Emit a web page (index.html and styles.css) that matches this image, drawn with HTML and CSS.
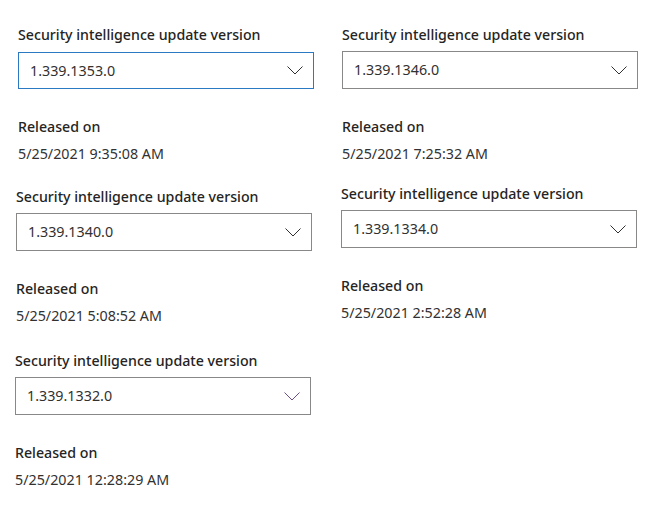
FILE: index.html
```html
<!DOCTYPE html>
<html>
<head>
<meta charset="utf-8">
<link rel="stylesheet" href="styles.css">
</head>
<body>
<div class="page">
  <div class="col col-left">
    <div class="panel p1">
      <div class="label">Security intelligence update version</div>
      <div class="dropdown focused"><span class="value">1.339.1353.0</span><svg class="chev" width="16" height="9" viewBox="0 0 16 9"><path d="M0.5 0.5 L8 8 L15.5 0.5" fill="none" stroke="currentColor" stroke-width="1"/></svg></div>
      <div class="label rel">Released on</div>
      <div class="date">5/25/2021 9:35:08 AM</div>
    </div>
    <div class="panel p3">
      <div class="label">Security intelligence update version</div>
      <div class="dropdown"><span class="value">1.339.1340.0</span><svg class="chev" width="16" height="9" viewBox="0 0 16 9"><path d="M0.5 0.5 L8 8 L15.5 0.5" fill="none" stroke="currentColor" stroke-width="1"/></svg></div>
      <div class="label rel">Released on</div>
      <div class="date">5/25/2021 5:08:52 AM</div>
    </div>
    <div class="panel p5">
      <div class="label">Security intelligence update version</div>
      <div class="dropdown hover"><span class="value">1.339.1332.0</span><svg class="chev" width="16" height="9" viewBox="0 0 16 9"><path d="M0.5 0.5 L8 8 L15.5 0.5" fill="none" stroke="currentColor" stroke-width="1"/></svg></div>
      <div class="label rel">Released on</div>
      <div class="date">5/25/2021 12:28:29 AM</div>
    </div>
  </div>
  <div class="col col-right">
    <div class="panel p2">
      <div class="label">Security intelligence update version</div>
      <div class="dropdown"><span class="value">1.339.1346.0</span><svg class="chev" width="16" height="9" viewBox="0 0 16 9"><path d="M0.5 0.5 L8 8 L15.5 0.5" fill="none" stroke="currentColor" stroke-width="1"/></svg></div>
      <div class="label rel">Released on</div>
      <div class="date">5/25/2021 7:25:32 AM</div>
    </div>
    <div class="panel p4">
      <div class="label">Security intelligence update version</div>
      <div class="dropdown"><span class="value">1.339.1334.0</span><svg class="chev" width="16" height="9" viewBox="0 0 16 9"><path d="M0.5 0.5 L8 8 L15.5 0.5" fill="none" stroke="currentColor" stroke-width="1"/></svg></div>
      <div class="label rel">Released on</div>
      <div class="date">5/25/2021 2:52:28 AM</div>
    </div>
  </div>
</div>
</body>
</html>
```
FILE: styles.css
```css
html, body {
  margin: 0;
  padding: 0;
  background: #ffffff;
}
body {
  font-family: "Noto Sans", "Open Sans", sans-serif;
  color: #323130;
  font-size: 14px;
}
.page {
  display: flex;
  width: 661px;
  height: 513px;
}
.col {
  display: flex;
  flex-direction: column;
}
.col-left { width: 324px; }
.col-right { width: 337px; }
.panel {
  display: flex;
  flex-direction: column;
}
.label {
  font-weight: 500;
  font-size: 14.2px;
  line-height: 20px;
  height: 20px;
  color: #252423;
}
.dropdown {
  box-sizing: border-box;
  width: 296px;
  height: 38px;
  margin-top: 6px;
  border: 1px solid #8a8886;
  display: flex;
  align-items: center;
  justify-content: space-between;
  padding: 0 10px 0 11px;
  color: #323130;
}
.dropdown.focused {
  border-color: #2b79c2;
  height: 37px;
  margin-top: 7px;
}
.dropdown.hover .chev { color: #6e4f8e; }
.value { line-height: 20px; font-size: 14.3px; }
.chev { color: #323130; display: block; }
.label.rel { margin-top: 28px; }
.date {
  margin-top: 7px;
  line-height: 20px;
  font-size: 14.3px;
}
.p1 { margin: 25px 0 0 18px; }
.p3 { margin: 23px 0 0 16px; }
.p5 { margin: 25px 0 0 15px; }
.p2 { margin: 25px 0 0 18px; }
.p4 { margin: 20px 0 0 17px; }
```
